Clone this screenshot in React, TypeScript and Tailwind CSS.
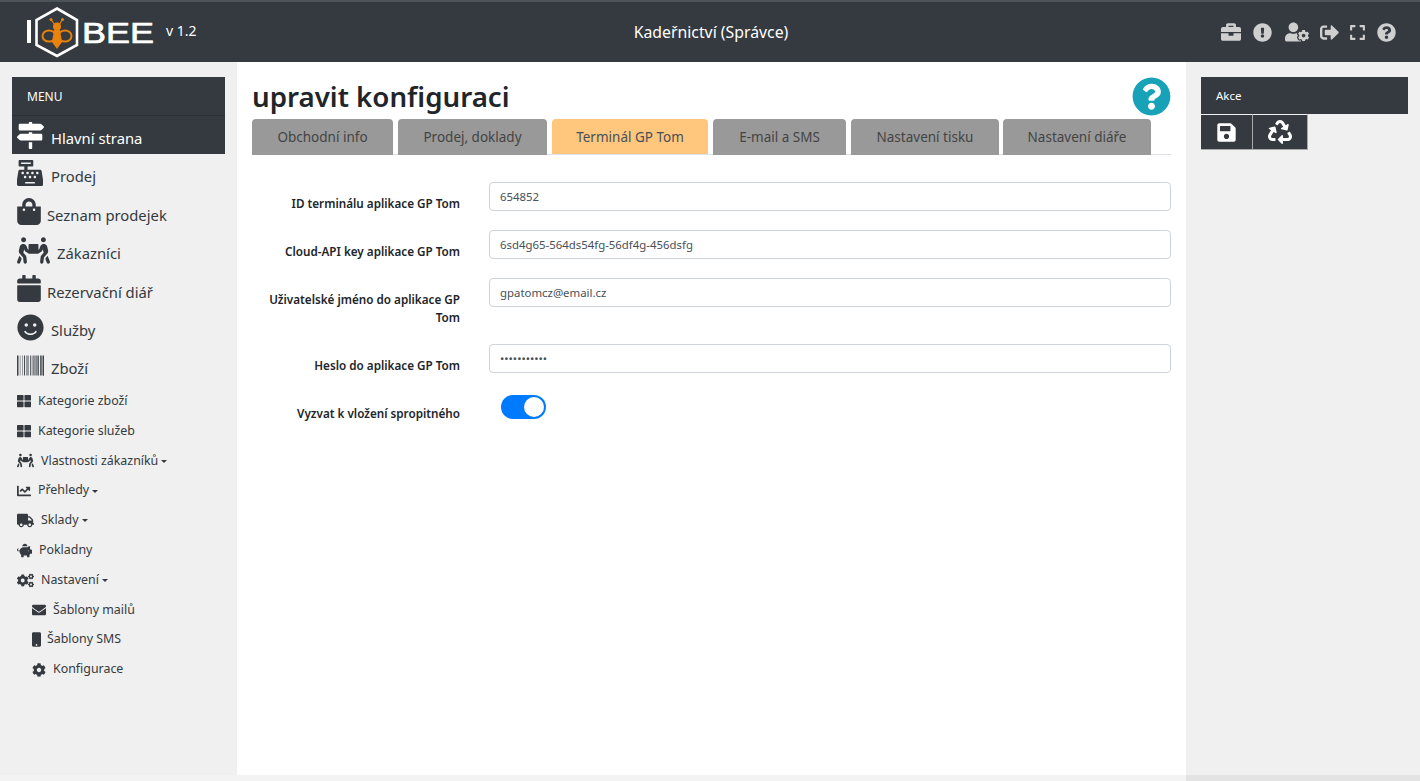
import React from "react";
import {
  FaBarcode, FaBriefcase, FaCalendar, FaCashRegister, FaChartLine, FaCog, FaCogs, FaEnvelope,
  FaExclamationCircle, FaExpand, FaMapSigns, FaMobile, FaPeopleCarry, FaPiggyBank, FaQuestionCircle,
  FaRecycle, FaSave, FaShoppingBag, FaSignOutAlt, FaSmile, FaThLarge, FaTruck, FaUserCog,
} from "react-icons/fa";

function Logo() {
  return (
    <svg width="140" height="60" viewBox="20 2 140 60" className="block">
      <rect x="27" y="20" width="4" height="23" fill="#fff" />
      <path d="M57 8.5 L77 20 V45 L57 56 L36.5 45 V20 Z" fill="none" stroke="#fff" strokeWidth="2.6" />
      <g fill="#e8820c">
        <ellipse cx="49" cy="36" rx="6.5" ry="5.5" fill="none" stroke="#e8820c" strokeWidth="2" />
        <ellipse cx="65" cy="36" rx="6.5" ry="5.5" fill="none" stroke="#e8820c" strokeWidth="2" />
        <circle cx="57" cy="26.5" r="4" />
        <path d="M54 30 H60 L62 42 L57 49 L52 42 Z" />
        <circle cx="51" cy="19.5" r="1.5" />
        <circle cx="62.5" cy="19.5" r="1.5" />
        <path d="M51 19.5 L55 25 M62.5 19.5 L59 25" stroke="#e8820c" strokeWidth="1.2" />
      </g>
      <text x="82" y="43" fill="#fff" stroke="#fff" strokeWidth="0.7" fontFamily="Liberation Sans, sans-serif" fontSize="29" textLength="72" lengthAdjust="spacingAndGlyphs">BEE</text>
    </svg>
  );
}

const big = [
  { icon: <FaCashRegister size={26} className="-mt-[1px]" />, label: "Prodej", gap: "gap-[8px]", h: "h-[38px]", mt: "mt-[6px]" },
  { icon: <FaShoppingBag className="w-[24px] h-[27px]" />, label: "Seznam prodejek", gap: "gap-[6px]", h: "h-[39px]", mt: "mt-[8px]" },
  { icon: <FaPeopleCarry size={33} />, label: "Zákazníci", gap: "gap-[7px]", h: "h-[38px]", mt: "mt-[6px]" },
  { icon: <FaCalendar className="w-[24px] h-[27px]" />, label: "Rezervační diář", gap: "gap-[6px]", h: "h-[39px]", mt: "mt-[8px]" },
  { icon: <FaSmile size={27} />, label: "Služby", gap: "gap-[7px]", h: "h-[38px]", mt: "mt-[6px]" },
  { icon: <FaBarcode size={27} />, label: "Zboží", gap: "gap-[7px]", h: "h-[39px]", mt: "mt-[6px]" },
];

const Caret = () => <span className="inline-block ml-[3px] align-middle border-x-[3px] border-x-transparent border-t-[3px] border-t-[#333a40]" />;

const small = [
  { icon: <FaThLarge size={14} />, label: "Kategorie zboží", gap: "gap-[7px]", pl: "pl-[5px]" },
  { icon: <FaThLarge size={14} />, label: "Kategorie služeb", gap: "gap-[7px]", pl: "pl-[5px]" },
  { icon: <FaPeopleCarry size={17} />, label: "Vlastnosti zákazníků", gap: "gap-[7px]", pl: "pl-[5px]", caret: true },
  { icon: <FaChartLine size={14} />, label: "Přehledy", gap: "gap-[7px]", pl: "pl-[5px]", caret: true },
  { icon: <FaTruck size={17} />, label: "Sklady", gap: "gap-[7px]", pl: "pl-[5px]", caret: true },
  { icon: <FaPiggyBank size={15} />, label: "Pokladny", gap: "gap-[7px]", pl: "pl-[5px]" },
  { icon: <FaCogs size={17} />, label: "Nastavení", gap: "gap-[7px]", pl: "pl-[5px]", caret: true },
  { icon: <FaEnvelope size={14} />, label: "Šablony mailů", gap: "gap-[7px]", pl: "pl-[20px]" },
  { icon: <FaMobile className="w-[9px] h-[15px]" />, label: "Šablony SMS", gap: "gap-[6px]", pl: "pl-[20px]" },
  { icon: <FaCog size={14} />, label: "Konfigurace", gap: "gap-[7px]", pl: "pl-[20px]" },
];

const tabs = [
  ["Obchodní info", "w-[141px] mr-[5px]"],
  ["Prodej, doklady", "w-[149px] mr-[5px]"],
  ["Terminál GP Tom", "w-[156px] mr-[5px]"],
  ["E-mail a SMS", "w-[133px] mr-[5px]"],
  ["Nastavení tisku", "w-[148px] mr-[4px]"],
  ["Nastavení diáře", "w-[148px]"],
];

const labelCls = "w-[208px] pt-[12px] text-right text-[11.7px] leading-[18px] font-semibold text-[#212529] shrink-0";
const inputCls = "ml-[29px] w-[682px] h-[29px] rounded-[4px] border border-[#ced4da] bg-white px-[10px] text-[11.4px] text-[#495057] outline-none";

function Field({ label, value, h = "h-[48px]", type = "text" }: { label: string; value: string; h?: string; type?: string }) {
  return (
    <div className={`flex ${h}`}>
      <label className={labelCls}>{label}</label>
      <input readOnly type={type} value={value} className={inputCls} />
    </div>
  );
}

export default function App() {
  return (
    <div className="h-[781px] w-[1420px] overflow-hidden flex flex-col bg-[#f3f3f3] font-['Noto_Sans','Open_Sans',sans-serif]">
      <header className="h-[62px] shrink-0 bg-[#343a40] border-t-2 border-t-[#4d5459] flex items-center relative">
        <div className="ml-[20px]"><Logo /></div>
        <span className="absolute left-[166px] top-[19px] text-[14px] leading-[20px] text-white">v 1.2</span>
        <div className="absolute left-0 right-0 top-[18px] text-center text-[15.8px] leading-[24px] text-white pl-[2px]">Kadeřnictví (Správce)</div>
        <div className="ml-auto mr-[24px] flex items-center text-[#cfcfcf]">
          <FaBriefcase size={20} />
          <FaExclamationCircle size={19} className="ml-[12px]" />
          <FaUserCog className="ml-[13px] w-[24px] h-[20px]" />
          <FaSignOutAlt size={19} className="ml-[11px]" />
          <FaExpand size={17} className="ml-[10px]" />
          <FaQuestionCircle size={19} className="ml-[11px]" />
        </div>
      </header>
      <div className="flex h-[713px] shrink-0">
        <aside className="w-[237px] shrink-0 bg-[#f0f0f0] pt-[15px] pl-[12px]">
          <div className="w-[213px] bg-[#343a40] text-white">
            <div className="h-[39px] pl-[15px] pt-[1px] flex items-center text-[12px] border-b border-b-[#2b3035]">MENU</div>
            <div className="h-[38px] pl-[5px] flex items-center gap-[7px] text-[14.8px]"><FaMapSigns size={27} /><span className="mt-[6px]">Hlavní strana</span></div>
          </div>
          <nav className="text-[#343a40]">
            {big.map((b) => (
              <div key={b.label} className={`${b.h} pl-[5px] flex items-center ${b.gap} text-[14.8px]`}>
                <span className="shrink-0">{b.icon}</span><span className={b.mt}>{b.label}</span>
              </div>
            ))}
            <div className="h-[1.5px]" />
            {small.map((s) => (
              <div key={s.label} className={`h-[29.8px] ${s.pl} flex items-center ${s.gap} text-[12.4px]`}>
                <span className="shrink-0">{s.icon}</span><span>{s.label}{s.caret && <Caret />}</span>
              </div>
            ))}
          </nav>
        </aside>
        <main className="w-[949px] shrink-0 bg-white pl-[15px] pr-[15px]">
          <div className="h-[57px] flex items-end pb-[3px] relative">
            <h1 className="text-[27.7px] leading-[40px] font-semibold text-[#212529]">upravit konfiguraci</h1>
            <FaQuestionCircle size={39} className="text-[#17a2b8] absolute right-0 top-[15px]" />
          </div>
          <div className="flex h-[36px] border-b border-b-[#dee2e6] w-[919px]">
            {tabs.map(([t, w]) => (
              <div key={t} className={`${w} rounded-t-[4px] text-center text-[13.5px] leading-[37px] ${t === "Terminál GP Tom" ? "h-[35px] bg-[#ffc67d] text-[#495057]" : "h-[36px] bg-[#999999] text-[#444444]"}`}>
                {t}
              </div>
            ))}
          </div>
          <div className="pt-[27px]">
            <Field label="ID terminálu aplikace GP Tom" value="654852" />
            <Field label="Cloud-API key aplikace GP Tom" value="6sd4g65-564ds54fg-56df4g-456dsfg" />
            <Field label="Uživatelské jméno do aplikace GP Tom" value="gpatomcz@email.cz" h="h-[66px]" />
            <Field label="Heslo do aplikace GP Tom" value="12345678901" type="password" />
            <div className="flex">
              <label className={labelCls}>Vyzvat k vložení spropitného</label>
              <div className="ml-[41px] mt-[3px] w-[45px] h-[24px] rounded-full bg-[#007bff] relative">
                <span className="absolute right-[2px] top-[2px] w-[20px] h-[20px] rounded-full bg-white" />
              </div>
            </div>
          </div>
        </main>
        <aside className="flex-1 bg-[#f0f0f0] pt-[15px] pl-[15px]">
          <div className="w-[207px] h-[37px] bg-[#343a40] text-white text-[11.5px] pl-[15px] pt-[1px] flex items-center">Akce</div>
          <div className="flex h-[36px]">
            <div className="w-[52px] bg-[#343a40] border-t border-t-[#f0f0f0] border-r border-r-[#aaaaaa] border-b border-b-[#aaaaaa] flex items-center justify-center text-white"><FaSave size={21} /></div>
            <div className="w-[55px] bg-[#343a40] border-t border-t-[#f0f0f0] border-r border-r-[#aaaaaa] border-b border-b-[#aaaaaa] flex items-center justify-center text-white"><FaRecycle size={24} /></div>
          </div>
        </aside>
      </div>
      <div className="flex flex-1">
        <div className="w-[1186px] bg-[#f3f3f3]" />
        <div className="flex-1 bg-[#e3e3e3]" />
      </div>
    </div>
  );
}
